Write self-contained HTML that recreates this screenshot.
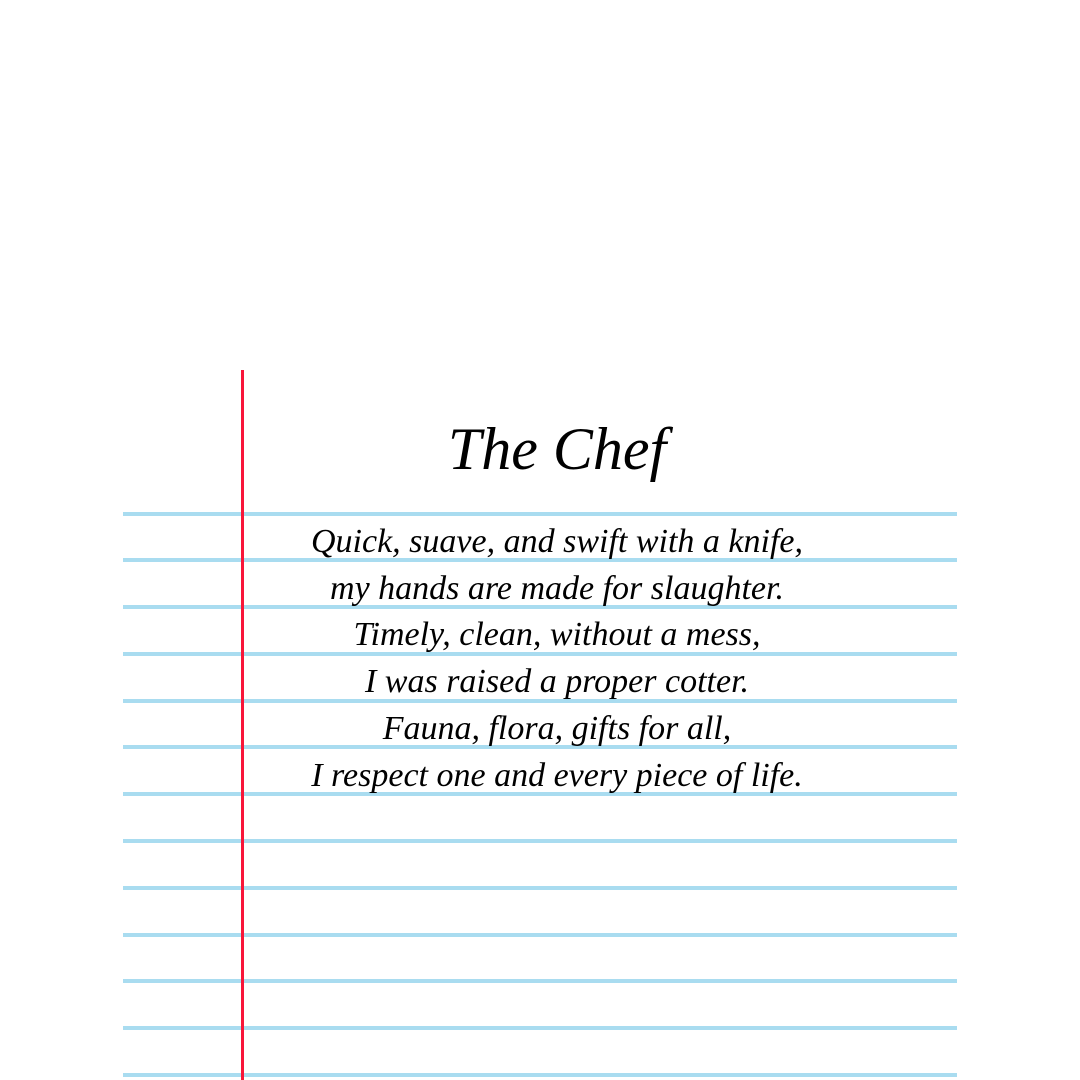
<!DOCTYPE html>
<html><head><style>
body{margin:0;width:1080px;height:1080px;background:#fff;position:relative;overflow:hidden}
.l{position:absolute;left:123px;width:834px;height:4px;background:#a9dcf0}
.r{position:absolute;left:241px;top:370px;width:3px;height:710px;background:#f8163a}
.t{position:absolute;left:200px;width:714px;text-align:center;font-family:"Liberation Serif",serif;font-style:italic;color:#000}
</style></head><body>
<div class="l" style="top:512px"></div><div class="l" style="top:558px"></div><div class="l" style="top:605px"></div><div class="l" style="top:652px"></div><div class="l" style="top:699px"></div><div class="l" style="top:745px"></div><div class="l" style="top:792px"></div><div class="l" style="top:839px"></div><div class="l" style="top:886px"></div><div class="l" style="top:933px"></div><div class="l" style="top:979px"></div><div class="l" style="top:1026px"></div><div class="l" style="top:1073px"></div>
<div class="r"></div>
<div class="t" style="top:414px;font-size:60px;line-height:70px">The Chef</div>
<div class="t" style="top:519px;font-size:34px;line-height:46.7px">Quick, suave, and swift with a knife,<br>my hands are made for slaughter.<br>Timely, clean, without a mess,<br>I was raised a proper cotter.<br>Fauna, flora, gifts for all,<br>I respect one and every piece of life.</div>
</body></html>
